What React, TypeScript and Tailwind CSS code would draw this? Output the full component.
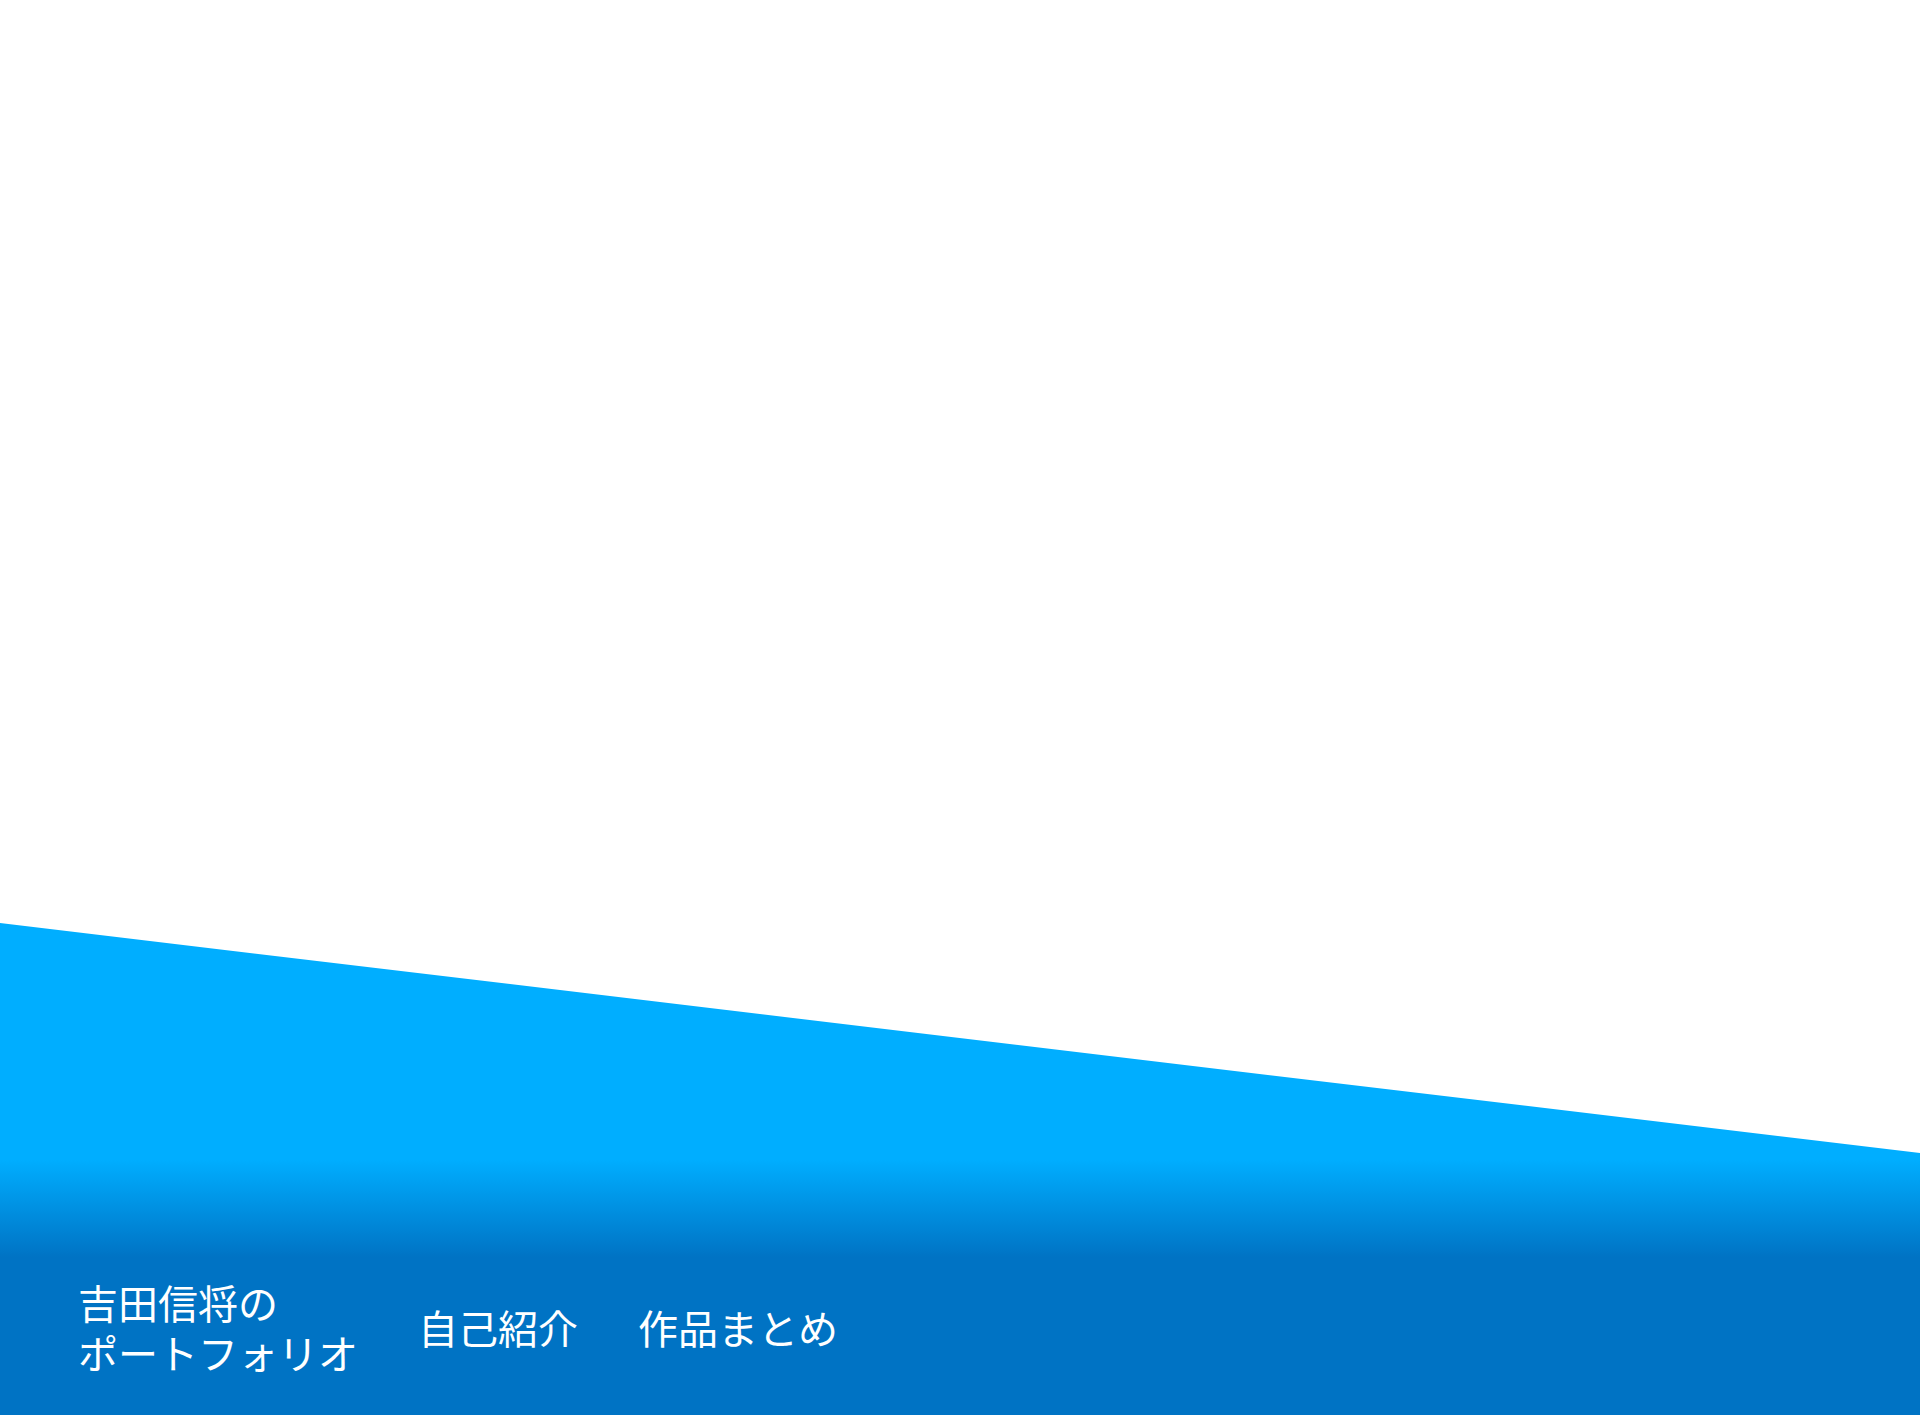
function Hero() {
  return <div className="h-[923px] w-full bg-white" data-name="Hero" />;
}

function NavItem({ label }: { label: string }) {
  return (
    <a href="#" className="shrink-0 text-[40px] leading-[50px] text-white whitespace-nowrap">
      {label}
    </a>
  );
}

function Footer() {
  return (
    <footer
      className="flex flex-1 flex-col justify-end bg-[linear-gradient(180deg,#00aeff_48%,#0073c4_68%)] [clip-path:polygon(0_0,100%_230px,100%_100%,0_100%)] pb-[38px] pl-[78px]"
      data-name="Footer"
    >
      <div className="flex items-center gap-[60px]">
        <div className="flex flex-col text-[40px] leading-[50px] text-white">
          <span>吉田信将の</span>
          <span>ポートフォリオ</span>
        </div>
        <nav className="flex items-center gap-[60px]">
          <NavItem label="自己紹介" />
          <NavItem label="作品まとめ" />
        </nav>
      </div>
    </footer>
  );
}

export default function App() {
  return (
    <div
      className="flex h-[1415px] w-full flex-col bg-white font-['Noto_Sans_CJK_JP','Noto_Sans',sans-serif]"
      data-name="Portfolio"
    >
      <Hero />
      <Footer />
    </div>
  );
}
